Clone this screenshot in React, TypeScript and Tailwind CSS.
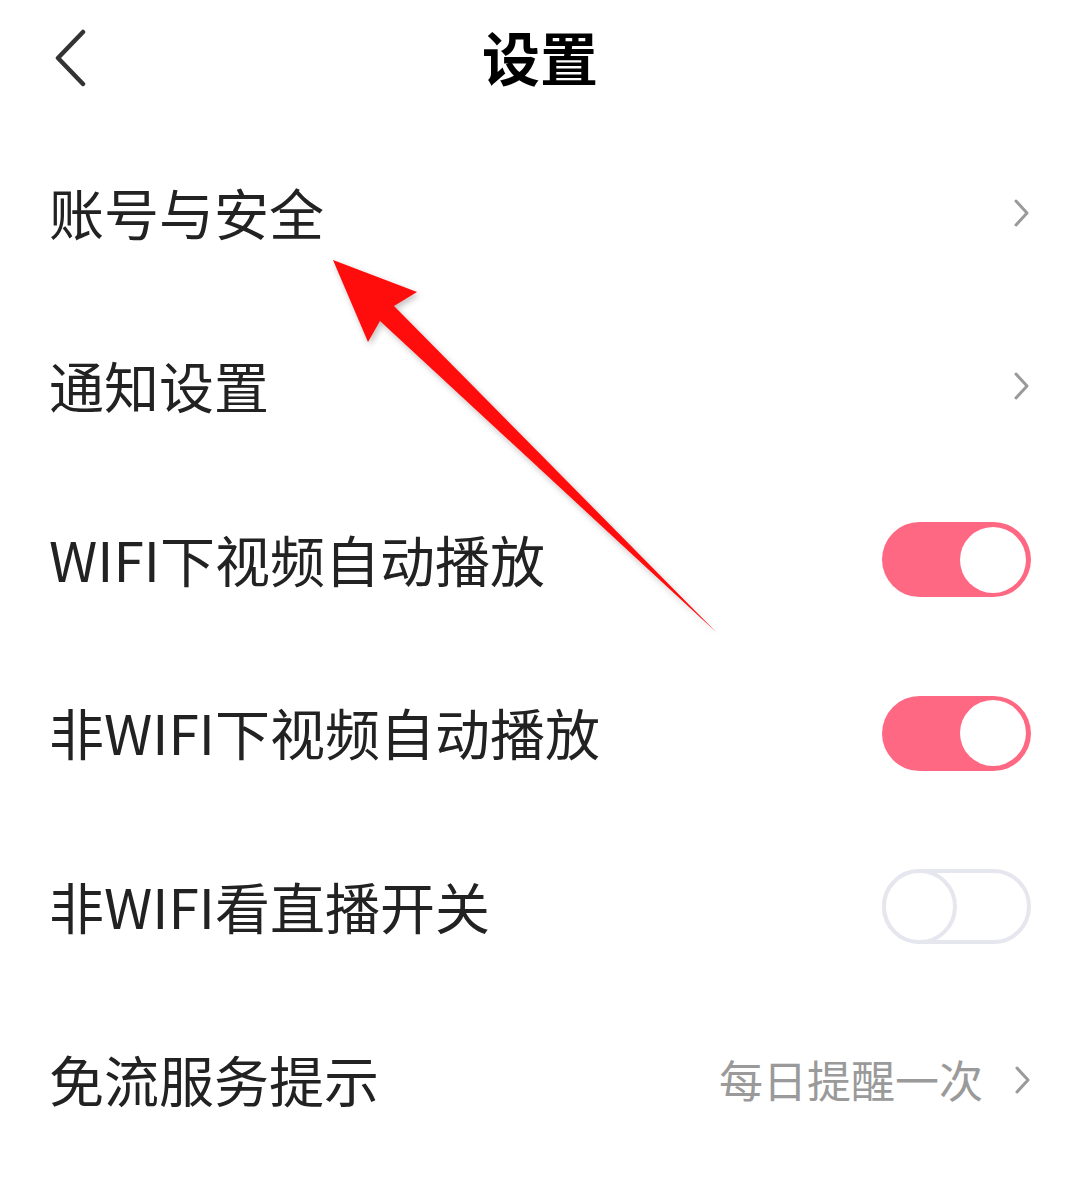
import React from "react";

const font = { fontFamily: '"Noto Sans CJK SC", "Noto Sans", sans-serif' };

function Chevron() {
  return (
    <svg width="16" height="28" viewBox="0 0 16 28" className="shrink-0">
      <polyline points="2,2 13,14 2,26" fill="none" stroke="#9a9a9a" strokeWidth="3" strokeLinecap="round" strokeLinejoin="round" />
    </svg>
  );
}

function Toggle({ on }: { on: boolean }) {
  if (on) {
    return (
      <div className="w-[149px] h-[75px] rounded-full bg-[#ff6882] flex items-center justify-end pr-[5px] shrink-0">
        <div className="w-[66px] h-[66px] rounded-full bg-white" />
      </div>
    );
  }
  return (
    <div className="w-[149px] h-[75px] rounded-full border-[4px] border-[#e6e6ee] bg-white flex items-center justify-start shrink-0">
      <div className="w-[75px] h-[75px] -ml-[4px] rounded-full border-[4px] border-[#e6e6ee] bg-white" />
    </div>
  );
}

function Row({ label, right }: { label: string; right: React.ReactNode }) {
  return (
    <div className="h-[173.5px] flex items-center justify-between pl-[49px] pr-[49px]">
      <span className="text-[55px] leading-none text-[#222222] -mt-[3px]">{label}</span>
      {right}
    </div>
  );
}

export default function App() {
  return (
    <div className="relative w-[1080px] h-[1203px] bg-white overflow-hidden" style={font}>
      <div className="relative h-[114px] flex items-center justify-center">
        <svg width="40" height="60" viewBox="0 0 40 60" className="absolute left-[50px] top-[27px]">
          <polyline points="33,5 8,31 33,57" fill="none" stroke="#333333" strokeWidth="4.5" strokeLinecap="round" strokeLinejoin="round" />
        </svg>
        <span className="text-[58px] font-bold leading-none text-black -mt-[2px]">设置</span>
      </div>
      <div className="pt-[12px]">
        <Row label="账号与安全" right={<span className="mr-[1px]"><Chevron /></span>} />
        <Row label="通知设置" right={<span className="mr-[1px]"><Chevron /></span>} />
        <Row label="WIFI下视频自动播放" right={<Toggle on />} />
        <Row label="非WIFI下视频自动播放" right={<Toggle on />} />
        <Row label="非WIFI看直播开关" right={<Toggle on={false} />} />
        <Row
          label="免流服务提示"
          right={
            <div className="flex items-center gap-[32px]">
              <span className="text-[44px] leading-none text-[#9a9a9a] -mt-[2px]">每日提醒一次</span>
              <Chevron />
            </div>
          }
        />
      </div>
      <svg className="absolute left-0 top-0 pointer-events-none" width="1080" height="1203" viewBox="0 0 1080 1203">
        <defs>
          <filter id="sh" x="-20%" y="-20%" width="140%" height="140%">
            <feDropShadow dx="2" dy="3" stdDeviation="3" floodColor="#000" floodOpacity="0.25" />
          </filter>
        </defs>
        <polygon
          points="333,260 417,292 394,306 716,632 380,321 368,342"
          fill="#ff0a0a"
          filter="url(#sh)"
        />
      </svg>
    </div>
  );
}
